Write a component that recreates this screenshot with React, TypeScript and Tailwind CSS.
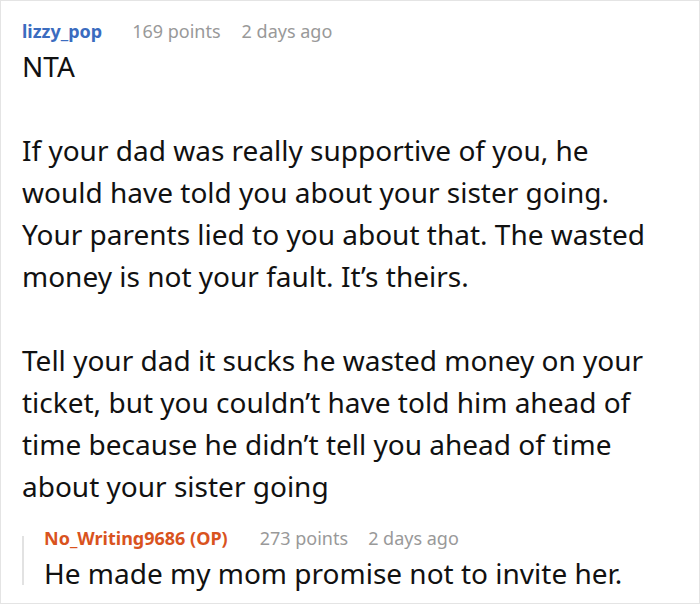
import React from "react";

export default function App() {
  return (
    <div className="w-[700px] h-[604px] border border-[#e4e4e4] bg-white overflow-hidden" style={{ fontFamily: '"Noto Sans", "Open Sans", sans-serif' }}>
      <div className="pl-[21px] pr-[40px] pt-[18px]">
        <div className="flex items-center h-[24px] text-[18px] leading-[24px]">
          <span className="font-bold text-[#3b6cbf] mr-[30px]">lizzy_pop</span>
          <span className="text-[#999999] mr-[21px]">169 points</span>
          <span className="text-[#999999]">2 days ago</span>
        </div>
        <div className="mt-[2px] text-[28px] leading-[42px] text-[#111111]">
          <p>NTA</p>
          <p className="mt-[42px]">If your dad was really supportive of you, he would have told you about your sister going. Your parents lied to you about that. The wasted money is not your fault. It’s theirs.</p>
          <p className="mt-[42px]">Tell your dad it sucks he wasted money on your ticket, but you couldn’t have told him ahead of time because he didn’t tell you ahead of time about your sister going</p>
        </div>
        <div className="flex mt-[19px]">
          <div className="w-[2px] bg-[#e2e2e2] mt-[10px] mb-[8px] shrink-0" />
          <div className="pl-[20px]">
            <div className="flex items-center h-[24px] text-[18px] leading-[24px]">
              <span className="font-bold text-[#d9531e] mr-[32px]">No_Writing9686 (OP)</span>
              <span className="text-[#999999] mr-[20px]">273 points</span>
              <span className="text-[#999999]">2 days ago</span>
            </div>
            <div className="text-[28px] leading-[40px] text-[#111111] mt-[3px] whitespace-nowrap">He made my mom promise not to invite her.</div>
          </div>
        </div>
      </div>
    </div>
  );
}
